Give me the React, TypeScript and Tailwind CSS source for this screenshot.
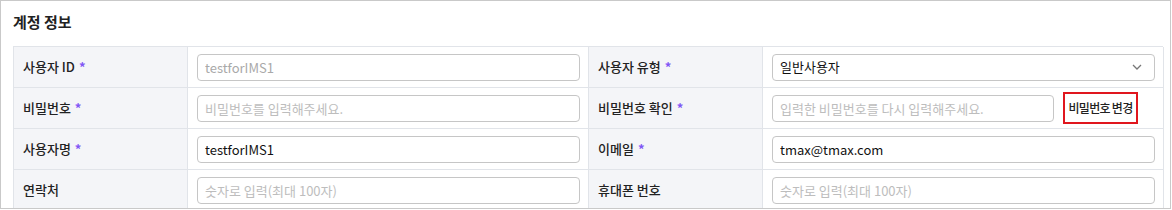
import React from 'react';

const font = { fontFamily: '"Noto Sans CJK KR", "Noto Sans", sans-serif' };

function Label({ text, required }: { text: string; required?: boolean }) {
  return (
    <div className="flex items-center bg-[#f4f5f8] border-r border-b border-[#e1e4e9] pl-[9px] text-[13px] font-medium text-[#222]">
      {text}
      {required && <span className="ml-[4px] text-[#8257f5] font-bold">*</span>}
    </div>
  );
}

function Field({ value, placeholder, disabled }: { value?: string; placeholder?: string; disabled?: boolean }) {
  return (
    <input
      readOnly
      defaultValue={value}
      placeholder={placeholder}
      disabled={disabled}
      style={font}
      className={`h-[27px] w-full rounded-[4px] border border-[#c6c6c6] bg-white px-[7px] text-[13px] outline-none placeholder:text-[#bdbdbd] ${disabled ? 'text-[#a9a9a9]' : 'text-[#111]'}`}
    />
  );
}

function Cell({ children }: { children: React.ReactNode }) {
  return <div className="flex items-center border-r border-b border-[#e1e4e9] pl-[9px] pr-[8px]">{children}</div>;
}

export default function App() {
  return (
    <div style={font} className="h-[210px] w-[1172px] bg-white">
      <div className="h-[209px] w-[1171px] overflow-hidden border border-[#c9c9c9] px-[12px] pt-[10px]">
        <h3 className="mb-[13px] text-[15px] font-bold leading-[22px] text-[#222]">계정 정보</h3>
        <div className="grid w-[1150px] grid-cols-[174px_401px_174px_401px] grid-rows-[41px_41px_41px_41px] border-l border-t border-[#e1e4e9]">
          <Label text="사용자 ID" required />
          <Cell>
            <Field value="testforIMS1" disabled />
          </Cell>
          <Label text="사용자 유형" required />
          <Cell>
            <div className="flex h-[27px] w-full items-center justify-between rounded-[4px] border border-[#c6c6c6] bg-white pl-[7px] pr-[12px] text-[13px] text-[#111]">
              <span>일반사용자</span>
              <svg width="10" height="6" viewBox="0 0 10 6" fill="none">
                <path d="M1 1l4 4 4-4" stroke="#777" strokeWidth="1.3" />
              </svg>
            </div>
          </Cell>

          <Label text="비밀번호" required />
          <Cell>
            <Field placeholder="비밀번호를 입력해주세요." />
          </Cell>
          <Label text="비밀번호 확인" required />
          <Cell>
            <div className="flex w-full items-center">
              <div className="w-[282px]">
                <Field placeholder="입력한 비밀번호를 다시 입력해주세요." />
              </div>
              <button className="ml-[9px] flex h-[32px] w-[75px] items-center justify-center whitespace-nowrap border-2 border-[#e0161e] bg-white p-0 text-[12px] font-medium tracking-[-0.7px] text-[#222]">
                비밀번호 변경
              </button>
            </div>
          </Cell>

          <Label text="사용자명" required />
          <Cell>
            <Field value="testforIMS1" />
          </Cell>
          <Label text="이메일" required />
          <Cell>
            <Field value="tmax@tmax.com" />
          </Cell>

          <Label text="연락처" />
          <Cell>
            <Field placeholder="숫자로 입력(최대 100자)" />
          </Cell>
          <Label text="휴대폰 번호" />
          <Cell>
            <Field placeholder="숫자로 입력(최대 100자)" />
          </Cell>
        </div>
      </div>
    </div>
  );
}
